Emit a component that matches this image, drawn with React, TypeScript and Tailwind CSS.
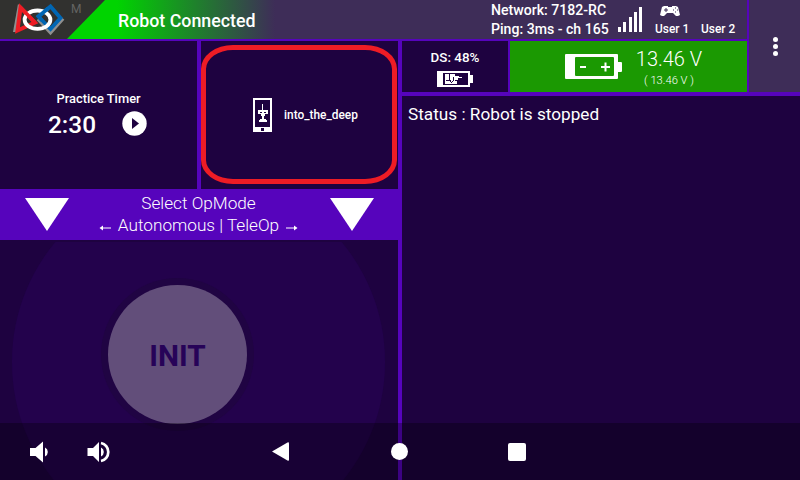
import React from "react";

function FirstLogo() {
  return (
    <svg className="ml-[12px] mt-[3px] h-[34px] w-[54px] shrink-0" viewBox="12 3 54 34" fill="none">
      <path d="M18 4 L13 32 L18 32 L22 8 Z" fill="#8f8f8f" />
      <path d="M38 19 L50.500 32.500 L63 18.500" stroke="#8f8f8f" strokeWidth="3.600" />
      <path d="M20.500 7.500 L35 22.500 L17.500 30.500 Z" stroke="#ed1c24" strokeWidth="4" />
      <path d="M37 15 L50.500 29 L60.500 18 L50.500 6.500 L37 17.500" stroke="#0066b3" strokeWidth="3.800" />
      <ellipse cx="37.500" cy="19.700" rx="12.900" ry="9.200" stroke="#fff" strokeWidth="3.800" />
      <path d="M24.500 11.500 L34.500 22" stroke="#ed1c24" strokeWidth="3.600" />
      <path d="M48 8.500 L38.500 16.500 L42 20.500" stroke="#0066b3" strokeWidth="3.600" />
    </svg>
  );
}

function Header() {
  return (
    <header className="flex h-[39px] bg-[#31312f]">
      <FirstLogo />
      <span className="ml-[5px] mt-[2px] w-3 text-[12px] leading-[14px] text-[#646462]">M</span>
      <div className="-ml-[16px] h-[39px] flex-1 bg-[linear-gradient(90deg,#00d400_0px,#00d400_50px,#3e2d58_208px)] pl-[51px] [clip-path:polygon(38px_0,100%_0,100%_100%,0_100%)]">
        <div className="flex">
          <h1 className="w-[373px] pt-[10px] text-[17.8px] leading-[21px] font-medium">Robot Connected</h1>
          <p className="w-[127px] whitespace-nowrap pt-[1px] text-[14.1px] leading-[19px] font-medium">
            Network: 7182-RC
            <br />
            Ping: 3ms - ch 165
          </p>
          <svg className="mt-[7px] h-[25px] w-[25px]" viewBox="0 0 25 25" fill="#fff">
            <path d="M0 20h3v5h-3zM5 15h3v10h-3zM11 10h3v15h-3zM16 5h3v20h-3zM21 0h3v25h-3z" />
          </svg>
          <div className="ml-[12px] w-[46px]">
            <svg className="ml-[5px] mt-[5px] h-[12px] w-[20px]" viewBox="0 0 20 12">
              <path d="M4 1h4v1h4V1h4l2 1 1 4 1 4-2 1h-2l-3-3H7l-3 3H2L0 10l1-4 1-4z" fill="#fff" />
              <path d="M4 5h4M6 3v4M13 5h1M15 3h1M15 7h1M17 5h1" stroke="#3e2d58" strokeWidth="1" />
            </svg>
            <span className="block pt-[5px] text-[11.9px] leading-[14px] font-medium">User 1</span>
          </div>
          <span className="whitespace-nowrap pt-[22px] text-[11.9px] leading-[14px] font-medium">User 2</span>
        </div>
      </div>
    </header>
  );
}

function PracticeTimer() {
  return (
    <section className="w-[197px] bg-[#1e0240] pt-[50px]">
      <h2 className="text-center text-[12.9px] leading-[16px] font-medium">Practice Timer</h2>
      <div className="flex items-center pl-[48px] pt-[2px]">
        <span className="w-[71px] text-[24.4px] leading-[32px] font-medium">2:30</span>
        <svg className="-mt-[4px] ml-[3px] h-[25px] w-[25px]" viewBox="0 0 25 25">
          <circle cx="12.5" cy="12.5" r="12.2" fill="#fff" />
          <path d="M10 7v11l7-5.5z" fill="#1e0240" />
        </svg>
      </div>
    </section>
  );
}

function ActiveConfig() {
  return (
    <section className="w-[197px] bg-[#1e0240] pt-[4px]">
      <div className="flex h-[139px] w-[196px] items-center rounded-[32px/24px] border-[5px] border-[#ee1c25] pl-[47px]">
        <svg className="h-[34px] w-[19px]" viewBox="0 0 19 34" shapeRendering="crispEdges">
          <path d="M0 0h19v34H0zM2 2v27h15V2zM8 30v3h3v-3z" fill="#fff" fillRule="evenodd" />
          <path d="M9 6h1v6h5v4h-3v2h-1v3h2v1h1v2H6v-2h1v-1h2v-3H8v-2H5v-4h4z" fill="#fff" />
          <path d="M7 14h2v1H7zM11 14h2v1h-2z" fill="#1e0240" />
        </svg>
        <span className="ml-[12px] text-[11.9px] leading-[16px] font-medium">into_the_deep</span>
      </div>
    </section>
  );
}

function OpModeBar() {
  return (
    <section className="flex h-[51px] bg-[#5604bc] pl-[25px] pt-[3px]">
      <svg className="mt-[6px] h-[33px] w-[44px]" viewBox="0 0 44 33">
        <path d="M0 0h44L22 33z" fill="#fff" />
      </svg>
      <div className="w-[261px] pr-[2px] text-center text-[17.2px] leading-[22px] font-light">
        Select OpMode
        <div className="flex items-center justify-center gap-[7px] whitespace-nowrap">
          <Arrow />
          <span>Autonomous | TeleOp</span>
          <Arrow flip />
        </div>
      </div>
      <svg className="mt-[6px] h-[33px] w-[44px]" viewBox="0 0 44 33">
        <path d="M0 0h44L22 33z" fill="#fff" />
      </svg>
    </section>
  );
}

function Arrow({ flip = false }: { flip?: boolean }) {
  return (
    <svg className={flip ? "mt-[6px] h-[8px] w-[12px] rotate-180" : "mt-[6px] h-[8px] w-[12px]"} viewBox="0 0 12 8">
      <path d="M2 4h10" stroke="#fff" strokeWidth="1" />
      <path d="M0.500 4l3.500-2.500v5z" fill="#fff" />
    </svg>
  );
}

function InitPad() {
  return (
    <section className="relative min-h-0 flex-1 overflow-hidden bg-[#1e0240]">
      <div className="absolute inset-x-0 bottom-0 top-[2px] overflow-hidden">
        <div className="absolute left-[12px] top-[-67px] h-[374px] w-[373px] rounded-full bg-[#23024c]" />
      </div>
      <button className="absolute left-[108px] top-[45px] h-[139px] w-[139px] rounded-full bg-[#624e7a] pt-[3px] text-[29.8px] font-bold text-[#270358] shadow-[0_0_0_7px_#200443]">
        INIT
      </button>
    </section>
  );
}

function Battery({ className, charging = false }: { className: string; charging?: boolean }) {
  return charging ? (
    <svg className={className} viewBox="0 0 36 16" shapeRendering="crispEdges">
      <path d="M0 0h33v4h3v8h-3v4H0zM6 2v12h25V2z" fill="#fff" fillRule="evenodd" />
      <path d="M8 3h10v2h4v1h3v1h-4v2h-3v1h2v3H8z" fill="#fff" />
      <path d="M12 3v6M9 9h4M13 9v2M16 6v3M17 9l-3 3" stroke="#1e0240" fill="none" />
    </svg>
  ) : (
    <svg className={className} viewBox="0 0 57 26">
      <path d="M1 0h51q1 0 1 1v7h3q1 0 1 1v8q0 1-1 1h-3v6q0 1-1 1H1q-1 0-1-1V1q0-1 1-1zM11 3q-1 0-1 1v17q0 1 1 1h37q1 0 1-1V4q0-1-1-1z" fill="#fff" fillRule="evenodd" />
      <path d="M15 13h6M36 13h9M40.500 8.500v9" stroke="#fff" strokeWidth="2" />
    </svg>
  );
}

function NavigationBar() {
  return (
    <nav className="absolute inset-x-0 bottom-0 flex h-[57px] items-center bg-black/30">
      <svg className="ml-[30px] h-[22px] w-[20px]" viewBox="0 0 20 22" fill="#fff">
        <path d="M0 7h5.500L13 .5v21L5.500 15H0zM15 6.500a5 5 0 0 1 0 9z" />
      </svg>
      <svg className="ml-[37px] h-[22px] w-[23px]" viewBox="0 0 23 22" fill="#fff">
        <path d="M.5 7H6l6-6v20l-6-6H.5zM14 6.500a5 5 0 0 1 0 9z" />
        <path d="M14 2a9.200 9.200 0 0 1 0 18" fill="none" stroke="#fff" strokeWidth="2.700" />
      </svg>
      <svg className="ml-[162px] h-[19px] w-[17px]" viewBox="0 0 17 19">
        <path d="M0 9.500L15.500.4q1.500-.8 1.500 1v16.200q0 1.800-1.500 1z" fill="#fff" />
      </svg>
      <span className="ml-[102px] h-[17px] w-[17px] rounded-full bg-white" />
      <span className="ml-[100px] h-[18px] w-[18px] rounded-[2px] bg-white" />
    </nav>
  );
}

export default function App() {
  return (
    <div className="relative flex h-[480px] w-[800px] flex-col overflow-hidden bg-[#5604bc] font-[Roboto,sans-serif] text-white">
      <div className="flex h-[480px]">
        <div className="flex w-[800px] flex-col">
          <div className="flex h-[39px] gap-[2px]">
            <div className="w-[747px] shrink-0">
              <Header />
            </div>
            <div className="h-[92px] w-[51px] shrink-0 bg-[#3e2d58] pl-[24px] pt-[37px]">
              <div className="flex flex-col gap-[2px]">
                <i className="size-[5px] rounded-full bg-white" />
                <i className="size-[5px] rounded-full bg-white" />
                <i className="size-[5px] rounded-full bg-white" />
              </div>
            </div>
          </div>
          <main className="mt-[2px] flex min-h-0 flex-1 gap-[4px]">
            <div className="flex w-[398px] shrink-0 flex-col">
              <div className="flex h-[148px] gap-[4px]">
                <PracticeTimer />
                <ActiveConfig />
              </div>
              <OpModeBar />
              <InitPad />
            </div>
            <div className="flex w-[398px] shrink-0 flex-col">
              <div className="flex h-[51px] gap-[2px]">
                <section className="flex w-[106px] flex-col items-center bg-[#1e0240] pt-[9px]">
                  <span className="text-[13.4px] leading-[15px] font-medium">DS: 48%</span>
                  <Battery charging className="mt-[6px] h-[16px] w-[36px]" />
                </section>
                <section className="flex w-[237px] bg-[#1b9902] pl-[55px]">
                  <Battery className="mt-[13px] h-[26px] w-[57px]" />
                  <div className="ml-[7px] w-[80px] pt-[7px] text-center font-light">
                    <div className="text-[20px] leading-[23px]">13.46 V</div>
                    <div className="pt-[3px] text-[11.2px] leading-[13px]">( 13.46 V )</div>
                  </div>
                </section>
              </div>
              <section className="mt-[4px] flex-1 bg-[#1e0240] pl-[6px] pt-[7px] text-[17.2px] leading-[22px]">
                Status : Robot is stopped
              </section>
            </div>
          </main>
        </div>
      </div>
      <NavigationBar />
    </div>
  );
}
